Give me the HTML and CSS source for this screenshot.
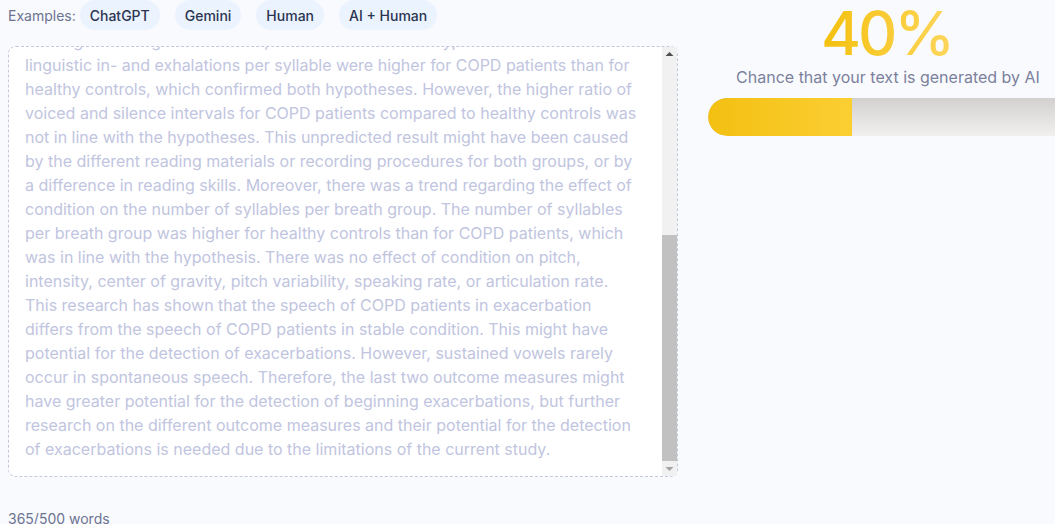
FILE: index.html
```html
<!DOCTYPE html>
<html lang="en">
<head>
<meta charset="utf-8">
<title>AI Detector</title>
<link rel="stylesheet" href="styles.css">
</head>
<body>
<div class="page">
  <section class="left">
    <div class="examples">
      <span class="examples-label">Examples:</span>
      <button class="chip">ChatGPT</button>
      <button class="chip">Gemini</button>
      <button class="chip">Human</button>
      <button class="chip">AI + Human</button>
    </div>
    <div class="editor">
      <textarea class="input" spellcheck="false">This study investigated whether the speech of patients with chronic obstructive
pulmonary disease (COPD) differs between the exacerbation phase and the stable
phase of the disease. Speech recordings were made of patients who were admitted
to the hospital with an acute exacerbation and again once they had recovered and
were in stable condition. In addition, a group of healthy controls matched for
age and gender was recorded reading the same text. Several acoustic and temporal
measures were extracted from the recordings, including pitch, intensity, center
of gravity, pitch variability, speaking rate, articulation rate, the number of
syllables per breath group, and the number of pauses. It was hypothesized that
patients in exacerbation would produce fewer syllables per breath group and
more pauses than patients in stable condition. The results showed that maximum
phonation time was shorter during exacerbation and that the number of pauses
was higher during exacerbation, which confirmed the hypothesis. The number of
linguistic in- and exhalations per syllable were higher for COPD patients than for
healthy controls, which confirmed both hypotheses. However, the higher ratio of
voiced and silence intervals for COPD patients compared to healthy controls was
not in line with the hypotheses. This unpredicted result might have been caused
by the different reading materials or recording procedures for both groups, or by
a difference in reading skills. Moreover, there was a trend regarding the effect of
condition on the number of syllables per breath group. The number of syllables
per breath group was higher for healthy controls than for COPD patients, which
was in line with the hypothesis. There was no effect of condition on pitch,
intensity, center of gravity, pitch variability, speaking rate, or articulation rate.
This research has shown that the speech of COPD patients in exacerbation
differs from the speech of COPD patients in stable condition. This might have
potential for the detection of exacerbations. However, sustained vowels rarely
occur in spontaneous speech. Therefore, the last two outcome measures might
have greater potential for the detection of beginning exacerbations, but further
research on the different outcome measures and their potential for the detection
of exacerbations is needed due to the limitations of the current study.</textarea>
      <div class="scrollbar" aria-hidden="true">
        <div class="sb-btn">
          <svg width="15" height="15" viewBox="0 0 15 15"><polygon points="3.5,9 11.5,9 7.5,5" fill="#505050"/></svg>
        </div>
        <div class="sb-track"><div class="sb-thumb"></div></div>
        <div class="sb-btn">
          <svg width="15" height="15" viewBox="0 0 15 15"><polygon points="3.5,6 11.5,6 7.5,10" fill="#a3a3a3"/></svg>
        </div>
      </div>
    </div>
    <div class="count">365/500 words</div>
  </section>
  <section class="right">
    <div class="percent">40%</div>
    <div class="caption">Chance that your text is generated by AI</div>
    <div class="bar"><div class="fill" style="width: 40%"></div></div>
  </section>
</div>
<script src="script.js"></script>
</body>
</html>
```
FILE: styles.css
```css
html, body {
  margin: 0;
  padding: 0;
  overflow: hidden;
  background: #f9fafe;
}
body {
  font-family: Inter, "Noto Sans", sans-serif;
}
.page {
  display: flex;
  gap: 30px;
  padding: 0 8px;
  width: 1068px;
}
.left {
  width: 670px;
  flex: none;
  display: flex;
  flex-direction: column;
}
.examples {
  display: flex;
  align-items: center;
  gap: 15px;
  height: 30px;
}
.examples-label {
  font-size: 14px;
  color: #6c7391;
  margin-right: -11px;
}
.chip {
  height: 30px;
  padding: 0 10px;
  border: none;
  border-radius: 15px;
  background: #ebf3fe;
  color: #2c3552;
  font-family: Inter, "Noto Sans", sans-serif;
  font-size: 14px;
  font-weight: 500;
}
.editor {
  position: relative;
  margin-top: 16px;
  width: 670px;
  height: 431px;
}
.input {
  display: block;
  box-sizing: border-box;
  width: 100%;
  height: 100%;
  margin: 0;
  padding: 16px 31px 15px 16px;
  border: 1px dashed #c4c7dc;
  border-radius: 8px;
  background: #fff;
  font-family: Inter, "Noto Sans", sans-serif;
  font-size: 16px;
  line-height: 24px;
  color: #c1c5e0;
  resize: none;
  outline: none;
  overflow-y: scroll;
  white-space: pre-wrap;
}
.scrollbar {
  position: absolute;
  top: 1px;
  right: 1px;
  bottom: 1px;
  width: 15px;
  display: flex;
  flex-direction: column;
  background: #f1f1f1;
}
.sb-btn {
  height: 15px;
  flex: none;
}
.sb-btn svg {
  display: block;
}
.sb-track {
  flex: 1;
  display: flex;
  flex-direction: column;
  justify-content: flex-end;
}
.sb-thumb {
  height: 226px;
  background: #c1c1c1;
}
.count {
  margin-top: 33px;
  font-size: 14px;
  color: #6c7391;
}
.right {
  width: 360px;
  flex: none;
  display: flex;
  flex-direction: column;
  align-items: center;
}
.percent {
  font-size: 61px;
  font-weight: 500;
  line-height: 66px;
  letter-spacing: -3px;
  text-indent: -3px;
  background: linear-gradient(90deg, #f4c10f 0%, #fdd65c 100%);
  -webkit-background-clip: text;
  background-clip: text;
  color: transparent;
}
.caption {
  font-size: 16px;
  line-height: 22px;
  color: #7b819c;
}
.bar {
  margin-top: 10px;
  align-self: stretch;
  height: 38px;
  border-radius: 19px 0 0 19px;
  background: linear-gradient(180deg, #d3d1cf 0%, #f1f0ee 100%);
  overflow: hidden;
}
.fill {
  height: 100%;
  border-radius: 19px 0 0 19px;
  background: linear-gradient(90deg, #f3c012 0%, #fbce32 100%);
}
```
FILE: script.js
```js
var t = document.querySelector('.input');
t.scrollTop = t.scrollHeight;
```
